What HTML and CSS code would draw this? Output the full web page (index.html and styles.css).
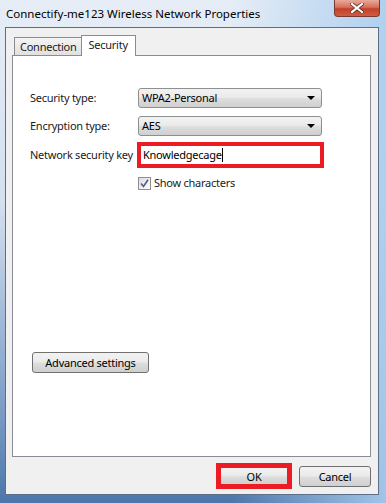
FILE: index.html
```html
<!DOCTYPE html>
<html lang="en">
  <head>
    <meta charset="UTF-8" />
    <title>Connectify-me123 Wireless Network Properties</title>
    <link rel="stylesheet" href="styles.css">
  </head>
  <body>
    <div class="window">
      <div class="title-bar">
        <p class="title">Connectify-me123 Wireless Network Properties</p>
        <button class="close-button">
          <svg width="14" height="10" viewBox="0 0 14 10">
            <path d="M2 1 L12 9 M12 1 L2 9" stroke="#5a2a22" stroke-width="3.6" stroke-linecap="square"/>
            <path d="M2 1 L12 9 M12 1 L2 9" stroke="white" stroke-width="2.2" stroke-linecap="square"/>
          </svg>
        </button>
      </div>

      <div class="client">
        <div class="tabs">
          <div class="tab">Connection</div>
          <div class="tab tab-active">Security</div>
        </div>

        <div class="panel">
          <div class="field-row">
            <span class="label">Security type:</span>
            <div class="select">
              <span>WPA2-Personal</span>
              <span class="arrow"></span>
            </div>
          </div>

          <div class="field-row">
            <span class="label">Encryption type:</span>
            <div class="select">
              <span>AES</span>
              <span class="arrow"></span>
            </div>
          </div>

          <div class="field-row key-row">
            <span class="label">Network security key</span>
            <div class="key-box">
              <span class="key-text">Knowledgecage</span><span class="caret"></span>
            </div>
          </div>

          <div class="check-row">
            <span class="checkbox">
              <svg width="9" height="9" viewBox="0 0 9 9">
                <path d="M1 4.5 L3.5 7.5 L8 0.8" fill="none" stroke="#4a5f8c" stroke-width="1.6"/>
              </svg>
            </span>
            <span>Show characters</span>
          </div>

          <button class="button advanced-button">Advanced settings</button>
        </div>

        <div class="footer">
          <div class="ok-highlight">
            <button class="button ok-button">OK</button>
          </div>
          <button class="button cancel-button">Cancel</button>
        </div>
      </div>
    </div>
  </body>
</html>
```

FILE: styles.css
```css
*{
  box-sizing: border-box;
}

body{
  margin: 0;
  font-family: "Noto Sans", "Open Sans", sans-serif;
  font-size: 11px;
  line-height: 16px;
  letter-spacing: -0.25px;
  color: #1a1a1a;
}

.window{
  width: 386px;
  height: 503px;
  padding: 0 7px 8px 5px;
  display: flex;
  flex-direction: column;
  background:
    linear-gradient(to right, rgba(255,255,255,0) 60%, rgba(170,205,238,0.9) 100%),
    linear-gradient(to bottom, #e6edf6 0%, #d3e0ef 40%, #7f9fc7 80%, #4d76a9 100%);
}

.title-bar{
  height: 27px;
  display: flex;
  align-items: flex-start;
  justify-content: space-between;
  flex-shrink: 0;
}

.title{
  margin: 6px 0 0 1px;
  font-size: 11.5px;
  letter-spacing: 0;
  color: #000;
  white-space: nowrap;
}

.close-button{
  width: 46px;
  height: 17px;
  margin-right: -1px;
  border: 1px solid #7a3a33;
  border-top: none;
  border-radius: 0 0 4px 4px;
  background: linear-gradient(to bottom, #e9a99b 0%, #d7705d 45%, #c1412a 55%, #cf5d40 100%);
  display: flex;
  align-items: center;
  justify-content: center;
  padding: 0;
}

.client{
  flex: 1;
  background-color: #f0f0f0;
  border: 1px solid #5d6f86;
  padding: 7px 7px 0 6px;
  display: flex;
  flex-direction: column;
}

.tabs{
  display: flex;
  align-items: flex-end;
  height: 20px;
  padding-left: 2px;
  flex-shrink: 0;
}

.tab{
  height: 18px;
  padding: 0 5px 0 5px;
  border: 1px solid #898c95;
  border-bottom: none;
  background: linear-gradient(to bottom, #f4f4f4, #e0e0e0);
  line-height: 18px;
}

.tab-active{
  height: 21px;
  line-height: 17px;
  background: #ffffff;
  margin-left: -1px;
  margin-bottom: -1px;
  position: relative;
  padding: 0 7px 0 6px;
}

.panel{
  height: 402px;
  flex-shrink: 0;
  background-color: white;
  border: 1px solid #898c95;
  padding: 32px 0 0 17px;
  display: flex;
  flex-direction: column;
  align-items: flex-start;
}

.field-row{
  display: flex;
  align-items: center;
  margin-bottom: 8px;
}

.label{
  width: 108px;
  flex-shrink: 0;
  white-space: nowrap;
}

.select{
  width: 184px;
  height: 20px;
  border: 1px solid #8e8f8f;
  border-radius: 3px;
  background: linear-gradient(to bottom, #f2f2f2 0%, #ebebeb 45%, #dddddd 55%, #cfcfcf 100%);
  display: flex;
  align-items: center;
  justify-content: space-between;
  padding: 0 6px 0 3px;
  color: #000;
}

.arrow{
  width: 0;
  height: 0;
  border-left: 4px solid transparent;
  border-right: 4px solid transparent;
  border-top: 4px solid #000;
}

.key-row{
  margin-top: -2px;
  margin-bottom: 0;
}

.key-box{
  width: 187px;
  height: 26px;
  margin-left: -1px;
  border: 4px solid #ec1c24;
  background-color: white;
  display: flex;
  align-items: center;
  padding-left: 2px;
  color: #000;
}

.caret{
  display: inline-block;
  width: 1px;
  height: 14px;
  background-color: #000;
}

.check-row{
  display: flex;
  align-items: center;
  gap: 3px;
  margin: 7px 0 0 108px;
}

.checkbox{
  width: 13px;
  height: 13px;
  border: 1px solid #8f8f8f;
  background: linear-gradient(135deg, #dcdcdc, #ffffff);
  display: flex;
  align-items: center;
  justify-content: center;
}

.button{
  font-family: "Noto Sans", "Open Sans", sans-serif;
  font-size: 11px;
  letter-spacing: -0.25px;
  color: #000;
  border: 1px solid #707070;
  border-radius: 3px;
  background: linear-gradient(to bottom, #f2f2f2 0%, #ebebeb 45%, #dddddd 55%, #cfcfcf 100%);
  padding: 0;
  cursor: pointer;
}

.advanced-button{
  width: 117px;
  height: 21px;
  margin-top: 161px;
  margin-left: 2px;
}

.footer{
  display: flex;
  justify-content: flex-end;
  align-items: center;
  gap: 7px;
  padding-top: 6px;
}

.ok-highlight{
  border: 4px solid #ec1c24;
  display: flex;
}

.ok-button{
  width: 68px;
  height: 18px;
  border-radius: 0;
  border-color: #ec1c24;
}

.cancel-button{
  width: 72px;
  height: 21px;
}
```
